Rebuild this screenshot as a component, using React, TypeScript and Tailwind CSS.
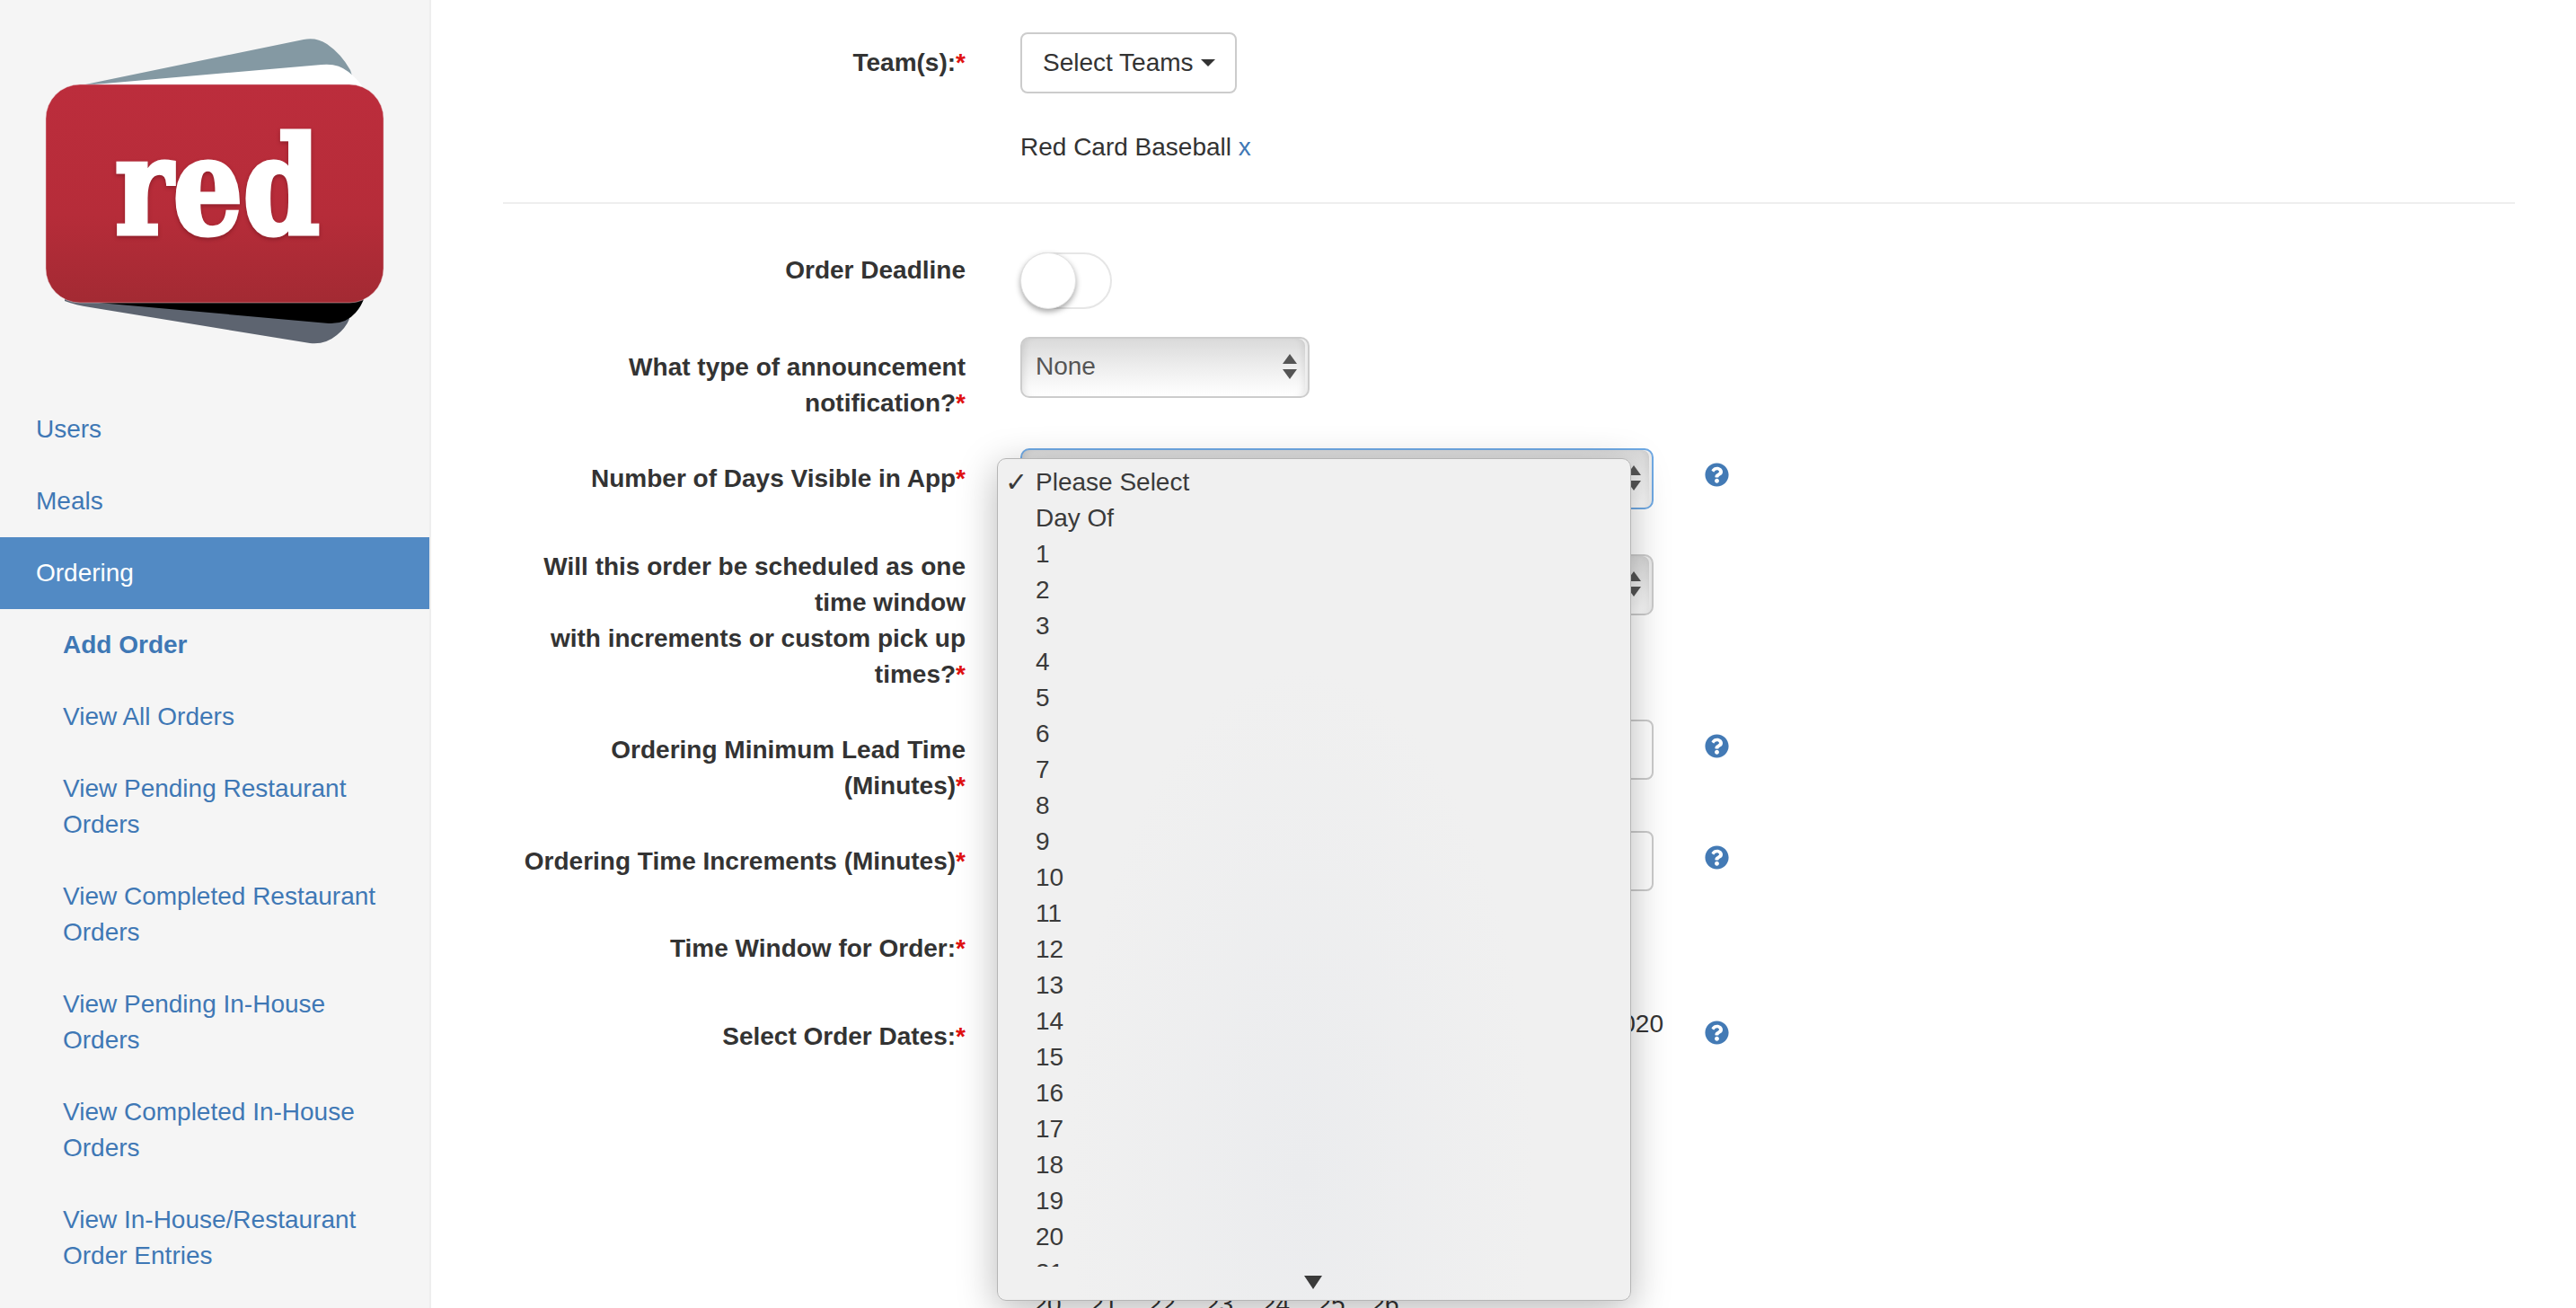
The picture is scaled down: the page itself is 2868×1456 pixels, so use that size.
import React from "react";
import { FaQuestionCircle } from "react-icons/fa";

const Logo = () => (
  <svg width="480" height="438" viewBox="0 0 480 438" className="block">
    <defs>
      <linearGradient id="redg" x1="0" y1="0" x2="0" y2="1">
        <stop offset="0" stopColor="#bc2d3c" />
        <stop offset="0.6" stopColor="#b62c39" />
        <stop offset="1" stopColor="#a32a33" />
      </linearGradient>
    </defs>
    <path d="M95 94 L338 44 Q352 41 364 49 Q380 60 390 78 L400 110 L95 110 Z" fill="#8499a3" />
    <path d="M105 94 L358 72 Q376 70 388 80 Q398 88 405 98 L405 110 L105 110 Z" fill="#ffffff" />
    <path d="M72 335 Q85 340 100 342 L345 382 Q362 384 375 373 Q385 365 389 355 L380 320 L72 320 Z" fill="#5d6470" />
    <path d="M110 337 L366 360 Q385 361 396 348 Q403 340 406 330 L300 320 Z" fill="#000000" />
    <rect x="51" y="94" width="376" height="243" rx="38" fill="url(#redg)" stroke="#e6c9cc" strokeWidth="0.5" />
    <text
      x="128"
      y="260"
      fontSize="150"
      fontWeight="700"
      textLength="228"
      lengthAdjust="spacingAndGlyphs"
      fill="#ffffff"
      stroke="#ffffff"
      strokeWidth="5"
      className="font-['DejaVu_Serif',serif] drop-shadow-[0_2px_2px_rgba(90,10,20,0.45)]"
    >
      red
    </text>
  </svg>
);

const NavItem = ({ lines, active, sub, bold }: { lines: string[]; active?: boolean; sub?: boolean; bold?: boolean }) => (
  <div
    className={
      (active ? "bg-[#528ac4] text-white " : "text-[#3f78b5] ") +
      (sub ? "pl-[70px] " : "pl-[40px] ") +
      (bold ? "font-bold " : "") +
      "py-5 whitespace-nowrap"
    }
  >
    {lines.map((l) => (
      <div key={l}>{l}</div>
    ))}
  </div>
);

const Help = () => (
  <div className="ml-[57px] pt-[16px] shrink-0">
    <FaQuestionCircle className="block w-[27px] h-[27px] text-[#437ab5]" />
  </div>
);

const Row = ({ lines, required = true, children }: { lines: string[]; required?: boolean; children?: React.ReactNode }) => (
  <div className="flex mb-[30px]">
    <div className="w-[515px] mr-[61px] shrink-0 pt-[14px] text-right font-bold whitespace-nowrap">
      {lines.map((l, i) => (
        <div key={l}>
          {l}
          {required && i === lines.length - 1 && <span className="text-[#e01010]">*</span>}
        </div>
      ))}
    </div>
    {children}
  </div>
);

const Arrows = () => (
  <svg width="18" height="30" viewBox="0 0 18 30" className="block shrink-0">
    <path d="M9 1 L17 12 L1 12 Z" fill="#555555" />
    <path d="M9 29 L17 18 L1 18 Z" fill="#555555" />
  </svg>
);

const Select = ({ value, width, focus }: { value?: string; width: string; focus?: boolean }) => (
  <div
    className={
      width +
      " h-[68px] rounded-[10px] border-2 bg-linear-to-b from-[#dadada] via-[#eeeeee] to-[#ffffff] shadow-[inset_10px_0_8px_-8px_rgba(0,0,0,0.1),inset_-10px_0_8px_-6px_rgba(0,0,0,0.1),inset_-3px_0_0_#ffffff] flex items-center justify-between pl-[15px] pr-[11px] pb-[2px] text-[#555555] " +
      (focus ? "border-[#6fa9e4]" : "border-[#cccccc]")
    }
  >
    <span>{value}</span>
    <Arrows />
  </div>
);

const Input = () => <div className="w-[705px] h-[67px] rounded-[8px] border-2 border-[#cccccc] bg-white" />;

const options = ["Please Select", "Day Of"].concat(Array.from({ length: 21 }, (_, i) => String(i + 1)));

const days = [
  { d: "20", c: "w-[62px]" },
  { d: "21", c: "w-[64px]" },
  { d: "22", c: "w-[65px]" },
  { d: "23", c: "w-[63px]" },
  { d: "24", c: "w-[63px]" },
  { d: "25", c: "w-[60px]" },
  { d: "26", c: "w-[60px]" },
];

const Dropdown = () => (
  <div className="absolute left-[1110px] top-[510px] w-[706px] h-[938px] rounded-[10px] border border-[#b5b5b5] bg-[radial-gradient(ellipse_at_48%_85%,#ebecee_0%,#f0f0f0_50%,#f0f0f0_100%)] shadow-[0_10px_44px_rgba(0,0,0,0.28)] text-[#3a3a3a]">
    <div className="relative h-[899px] pt-[6px] overflow-hidden">
      {options.map((o, i) => (
        <div key={o} className="relative pl-[42px] h-10 leading-10 whitespace-nowrap">
          {i === 0 && (
            <span className="absolute left-[8px] top-0 font-['DejaVu_Sans',sans-serif] font-bold text-[30px]">✓</span>
          )}
          {o}
        </div>
      ))}
    </div>
    <svg width="20" height="15" viewBox="0 0 20 15" className="block ml-[341px] mt-[10px]">
      <path d="M0 0 L20 0 L10 15 Z" fill="#3a3a3a" />
    </svg>
  </div>
);

export default function App() {
  return (
    <div className="relative flex w-[2868px] h-[1456px] overflow-hidden bg-white font-['Liberation_Sans',sans-serif] text-[28px] leading-10 text-[#333333]">
      <aside className="w-[480px] shrink-0 bg-[#f5f5f5] border-r-2 border-[#eeeeee]">
        <Logo />
        <NavItem lines={["Users"]} />
        <NavItem lines={["Meals"]} />
        <NavItem lines={["Ordering"]} active />
        <NavItem lines={["Add Order"]} sub bold />
        <NavItem lines={["View All Orders"]} sub />
        <NavItem lines={["View Pending Restaurant", "Orders"]} sub />
        <NavItem lines={["View Completed Restaurant", "Orders"]} sub />
        <NavItem lines={["View Pending In-House", "Orders"]} sub />
        <NavItem lines={["View Completed In-House", "Orders"]} sub />
        <NavItem lines={["View In-House/Restaurant", "Order Entries"]} sub />
      </aside>
      <main className="flex-1 pl-[80px] pr-[68px] pt-[36px]">
        <div className="flex">
          <div className="w-[515px] mr-[61px] shrink-0 pt-[14px] text-right font-bold">
            Team(s):<span className="text-[#e01010]">*</span>
          </div>
          <div>
            <div className="inline-flex items-center h-[68px] pl-[23px] pr-[22px] rounded-[8px] border-2 border-[#cccccc] bg-white">
              Select Teams
              <svg width="16" height="8" viewBox="0 0 16 8" className="ml-[8px]">
                <path d="M0 0 L16 0 L8 8 Z" fill="#333333" />
              </svg>
            </div>
            <div className="mt-[40px]">
              Red Card Baseball <span className="text-[#3f78b5]">x</span>
            </div>
          </div>
        </div>
        <hr className="mt-[41px] mb-[40px] border-0 h-[2px] bg-[#eeeeee]" />
        <Row lines={["Order Deadline"]} required={false}>
          <div className="relative mt-[14px] w-[102px] h-[63px] mb-px rounded-full border-2 border-[#e6e6e6] bg-white">
            <div className="absolute left-[-2px] top-[-2px] w-[62px] h-[63px] rounded-full bg-white border border-[#e2e2e2] shadow-[0_3px_6px_rgba(0,0,0,0.35)]" />
          </div>
        </Row>
        <Row lines={["What type of announcement", "notification?"]}>
          <Select value="None" width="w-[322px]" />
        </Row>
        <Row lines={["Number of Days Visible in App"]}>
          <Select width="w-[705px]" focus />
          <Help />
        </Row>
        <Row lines={["Will this order be scheduled as one", "time window", "with increments or custom pick up", "times?"]}>
          <div className="mt-[20px]">
            <Select width="w-[705px]" />
          </div>
        </Row>
        <Row lines={["Ordering Minimum Lead Time", "(Minutes)"]}>
          <Input />
          <Help />
        </Row>
        <Row lines={["Ordering Time Increments (Minutes)"]}>
          <Input />
          <Help />
        </Row>
        <Row lines={["Time Window for Order:"]}>
          <div className="h-[68px]" />
        </Row>
        <Row lines={["Select Order Dates:"]}>
          <div className="w-[705px]">
            <div className="w-[716px] text-right whitespace-nowrap">01/01/2020 - 12/31/2020</div>
            <div className="flex mt-[272px] -ml-px whitespace-nowrap">
              {days.map(({ d, c }) => (
                <div key={d} className={c + " text-center"}>
                  {d}
                </div>
              ))}
            </div>
          </div>
          <Help />
        </Row>
      </main>
      <Dropdown />
    </div>
  );
}
